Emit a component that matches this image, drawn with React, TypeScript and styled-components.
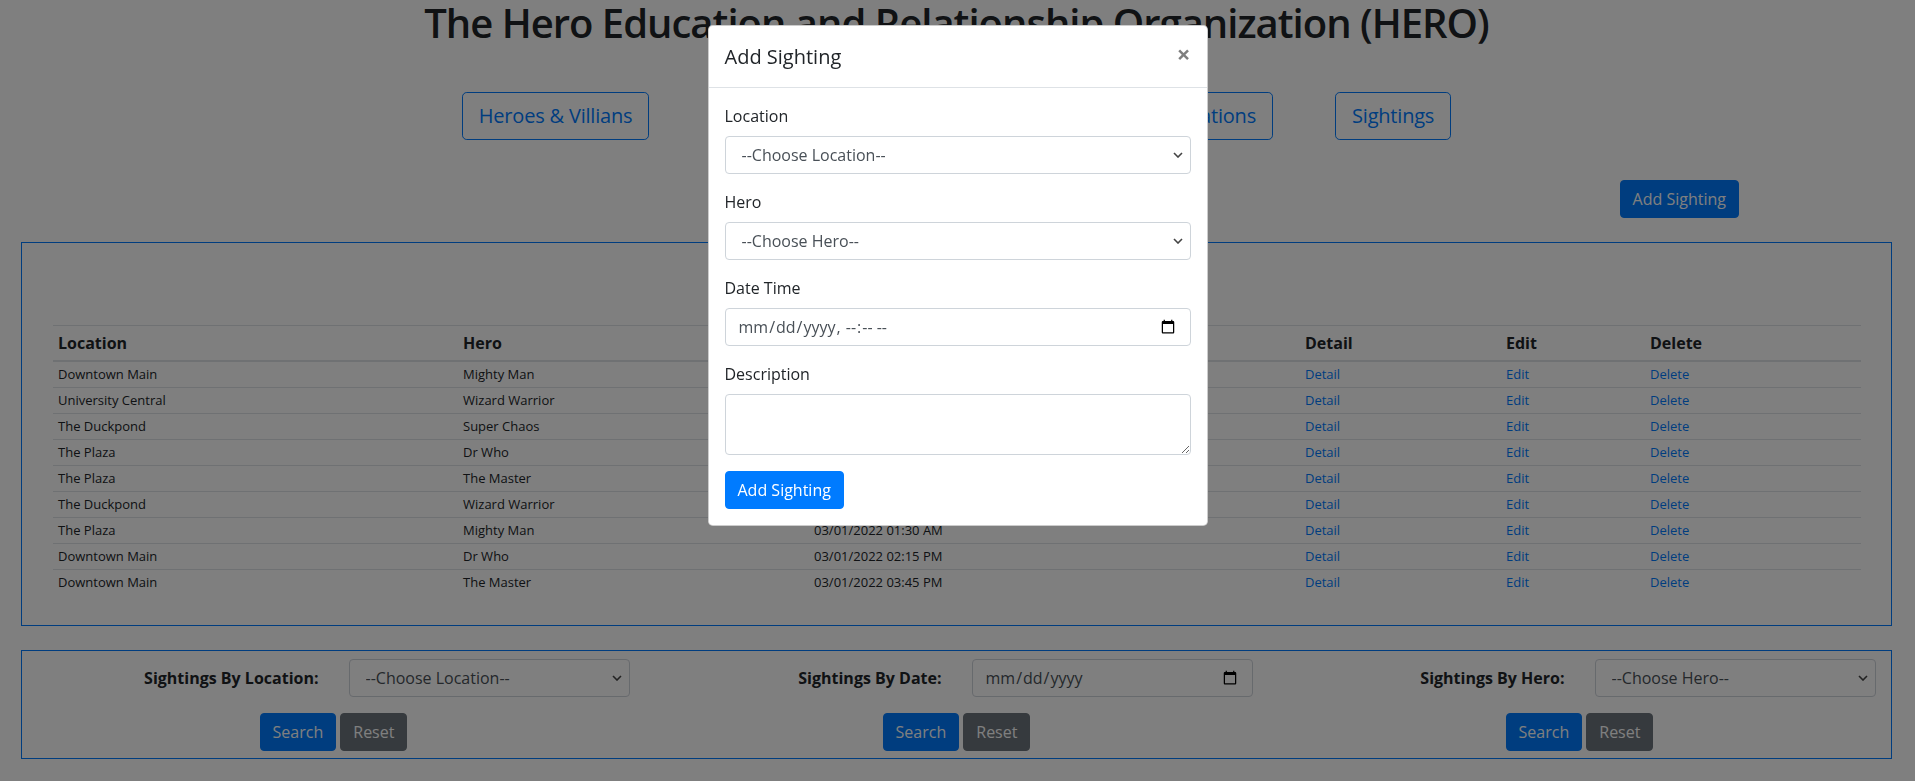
import React from 'react';
import styled, { createGlobalStyle } from 'styled-components';

const GlobalStyle = createGlobalStyle`
  html, body {
    margin: 0;
    padding: 0;
  }
  body {
    font-family: 'Open Sans', 'Noto Sans', 'Liberation Sans', sans-serif;
    font-size: 16px;
    line-height: 1.5;
    color: #212529;
    background: #fff;
    overflow: hidden;
  }
  *, *::before, *::after {
    box-sizing: border-box;
  }
`;

const Page = styled.div`
  padding: 0 23px 0 21px;
`;

const Heading = styled.h1`
  margin: -1px 0 0;
  font-size: 40px;
  font-weight: 600;
  line-height: 48px;
  letter-spacing: -1px;
  text-align: center;
`;

const Nav = styled.nav`
  display: flex;
  justify-content: center;
  gap: 62px;
  margin-top: 45px;
`;

const NavButton = styled.button`
  padding: 8px 16px;
  font-family: inherit;
  font-size: 20px;
  line-height: 30px;
  letter-spacing: -0.2px;
  color: #007bff;
  background: transparent;
  border: 1px solid #007bff;
  border-radius: 4.8px;
`;

const ActionRow = styled.div`
  display: flex;
  justify-content: flex-end;
  padding-right: 153px;
  margin-top: 40px;
`;

const Button = styled.button<{ $variant?: 'primary' | 'secondary' }>`
  padding: 6px 12px;
  font-family: inherit;
  font-size: 16px;
  line-height: 24px;
  color: #fff;
  background: ${(p) => (p.$variant === 'secondary' ? '#6c757d' : '#007bff')};
  border: 1px solid ${(p) => (p.$variant === 'secondary' ? '#6c757d' : '#007bff')};
  border-radius: 4px;
`;

const TableCard = styled.section`
  margin-top: 24px;
  padding: 82px 30px 30px 31px;
  border: 1px solid #007bff;
`;

const Table = styled.table`
  width: 100%;
  border-collapse: collapse;
  table-layout: fixed;
`;

const Th = styled.th`
  padding: 5px 5px;
  font-size: 16px;
  font-weight: 700;
  line-height: 24px;
  text-align: left;
  border-top: 1px solid #dee2e6;
  border-bottom: 2px solid #dee2e6;
`;

const Td = styled.td`
  padding: 3px 5px;
  font-size: 13px;
  line-height: 19px;
  border-top: 1px solid #dee2e6;
`;

const CellLink = styled.a`
  color: #007bff;
  text-decoration: none;
`;

const SearchCard = styled.section`
  display: grid;
  grid-template-columns: repeat(3, 1fr);
  margin-top: 24px;
  padding: 8px 0 7px;
  border: 1px solid #007bff;
`;

const SearchCol = styled.div`
  display: flex;
  flex-direction: column;
  gap: 16px;
`;

const FieldRow = styled.div`
  display: grid;
  grid-template-columns: 1fr 1fr;
  align-items: center;
`;

const FieldLabel = styled.label`
  padding-right: 15px;
  font-weight: 700;
  text-align: right;
`;

const FieldControl = styled.div`
  padding: 0 15px;
`;

const ButtonPair = styled.div`
  display: flex;
  justify-content: center;
  gap: 4px;
`;

const Control = styled.input`
  display: block;
  width: 100%;
  height: 38px;
  padding: 6px 12px;
  font-family: inherit;
  font-size: 16px;
  line-height: 24px;
  color: #495057;
  background: #fff;
  border: 1px solid #ced4da;
  border-radius: 4px;
`;

const TextArea = styled.textarea`
  display: block;
  width: 100%;
  height: 61px;
  padding: 6px 12px;
  font-family: inherit;
  font-size: 16px;
  line-height: 24px;
  color: #495057;
  background: #fff;
  border: 1px solid #ced4da;
  border-radius: 4px;
  resize: vertical;
`;

const SelectWrap = styled.div`
  position: relative;
`;

const Select = styled.select`
  display: block;
  width: 100%;
  height: 38px;
  padding: 6px 28px 6px 16px;
  font-family: inherit;
  font-size: 16px;
  line-height: 24px;
  color: #495057;
  background: #fff;
  border: 1px solid #ced4da;
  border-radius: 4px;
  appearance: none;
  -webkit-appearance: none;
`;

const Chevron = styled.svg`
  position: absolute;
  right: 8px;
  top: 50%;
  width: 10px;
  height: 6px;
  margin-top: -3px;
  pointer-events: none;
`;

const Backdrop = styled.div`
  position: fixed;
  inset: 0;
  background: rgba(0, 0, 0, 0.5);
`;

const ModalLayer = styled.div`
  position: fixed;
  inset: 0;
  display: flex;
  justify-content: center;
  align-items: flex-start;
  padding-top: 25px;
`;

const Dialog = styled.div`
  width: 500px;
  background: #fff;
  border: 1px solid rgba(0, 0, 0, 0.2);
  border-radius: 4.8px;
`;

const DialogHeader = styled.div`
  display: flex;
  align-items: flex-start;
  padding: 16px 16px 15px;
  border-bottom: 1px solid #dee2e6;
`;

const DialogTitle = styled.h5`
  margin: 0;
  font-size: 20px;
  font-weight: 500;
  line-height: 30px;
`;

const CloseButton = styled.button`
  margin: -16px -16px -16px auto;
  padding: 16px;
  font-family: inherit;
  font-size: 24px;
  font-weight: 700;
  line-height: 24px;
  color: #000;
  opacity: 0.5;
  text-shadow: 0 1px 0 #fff;
  background: transparent;
  border: 0;
`;

const DialogBody = styled.div`
  padding: 16px;
`;

const FormGroup = styled.div`
  margin-bottom: 16px;
`;

const FormLabel = styled.label`
  display: block;
  margin-bottom: 8px;
`;

const sightings = [
  ['Downtown Main', 'Mighty Man', '02/10/2022 09:15 AM'],
  ['University Central', 'Wizard Warrior', '02/12/2022 11:40 AM'],
  ['The Duckpond', 'Super Chaos', '02/15/2022 04:20 PM'],
  ['The Plaza', 'Dr Who', '02/18/2022 07:05 PM'],
  ['The Plaza', 'The Master', '02/21/2022 10:30 AM'],
  ['The Duckpond', 'Wizard Warrior', '02/25/2022 01:50 PM'],
  ['The Plaza', 'Mighty Man', '03/01/2022 01:30 AM'],
  ['Downtown Main', 'Dr Who', '03/01/2022 02:15 PM'],
  ['Downtown Main', 'The Master', '03/01/2022 03:45 PM'],
];

const ChooseSelect = ({ label }: { label: string }) => (
  <SelectWrap>
    <Select defaultValue="">
      <option value="">{label}</option>
    </Select>
    <Chevron viewBox="0 0 10 6">
      <path d="M1 1l4 4 4-4" fill="none" stroke="#444" strokeWidth="1.6" />
    </Chevron>
  </SelectWrap>
);

const SearchBlock = ({ label, children }: { label: string; children: React.ReactNode }) => (
  <SearchCol>
    <FieldRow>
      <FieldLabel>{label}</FieldLabel>
      <FieldControl>{children}</FieldControl>
    </FieldRow>
    <ButtonPair>
      <Button>Search</Button>
      <Button $variant="secondary">Reset</Button>
    </ButtonPair>
  </SearchCol>
);

export default function App() {
  return (
    <>
      <GlobalStyle />
      <Page>
        <Heading>The Hero Education and Relationship Organization (HERO)</Heading>
        <Nav>
          <NavButton>Heroes &amp; Villians</NavButton>
          <NavButton>Superpowers</NavButton>
          <NavButton>Organizations</NavButton>
          <NavButton>Locations</NavButton>
          <NavButton>Sightings</NavButton>
        </Nav>
        <ActionRow>
          <Button>Add Sighting</Button>
        </ActionRow>
        <TableCard>
          <Table>
            <colgroup>
              <col style={{ width: 405 }} />
              <col style={{ width: 351 }} />
              <col style={{ width: 491 }} />
              <col style={{ width: 201 }} />
              <col style={{ width: 144 }} />
              <col />
            </colgroup>
            <thead>
              <tr>
                <Th>Location</Th>
                <Th>Hero</Th>
                <Th>Date</Th>
                <Th>Detail</Th>
                <Th>Edit</Th>
                <Th>Delete</Th>
              </tr>
            </thead>
            <tbody>
              {sightings.map((row, i) => (
                <tr key={i}>
                  <Td>{row[0]}</Td>
                  <Td>{row[1]}</Td>
                  <Td>{row[2]}</Td>
                  <Td><CellLink href="#">Detail</CellLink></Td>
                  <Td><CellLink href="#">Edit</CellLink></Td>
                  <Td><CellLink href="#">Delete</CellLink></Td>
                </tr>
              ))}
            </tbody>
          </Table>
        </TableCard>
        <SearchCard>
          <SearchBlock label="Sightings By Location:">
            <ChooseSelect label="--Choose Location--" />
          </SearchBlock>
          <SearchBlock label="Sightings By Date:">
            <Control type="date" />
          </SearchBlock>
          <SearchBlock label="Sightings By Hero:">
            <ChooseSelect label="--Choose Hero--" />
          </SearchBlock>
        </SearchCard>
      </Page>
      <Backdrop />
      <ModalLayer>
        <Dialog>
          <DialogHeader>
            <DialogTitle>Add Sighting</DialogTitle>
            <CloseButton aria-label="Close">×</CloseButton>
          </DialogHeader>
          <DialogBody>
            <FormGroup>
              <FormLabel>Location</FormLabel>
              <ChooseSelect label="--Choose Location--" />
            </FormGroup>
            <FormGroup>
              <FormLabel>Hero</FormLabel>
              <ChooseSelect label="--Choose Hero--" />
            </FormGroup>
            <FormGroup>
              <FormLabel>Date Time</FormLabel>
              <Control type="datetime-local" />
            </FormGroup>
            <FormGroup>
              <FormLabel>Description</FormLabel>
              <TextArea rows={2} />
            </FormGroup>
            <Button>Add Sighting</Button>
          </DialogBody>
        </Dialog>
      </ModalLayer>
    </>
  );
}
